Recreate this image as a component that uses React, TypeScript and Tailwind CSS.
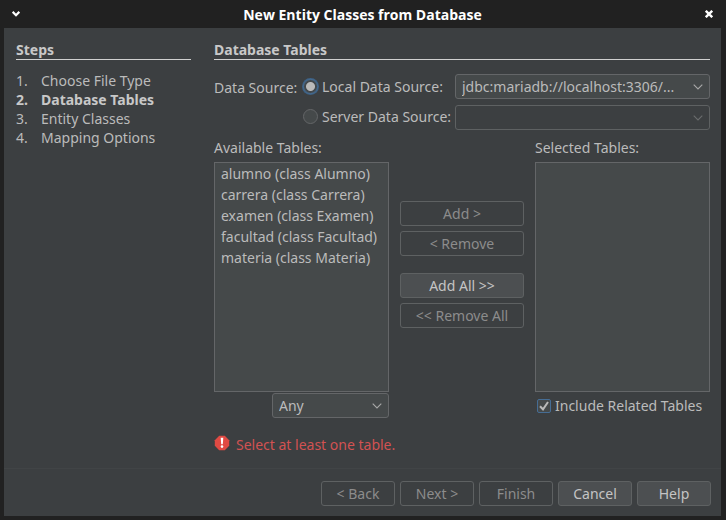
import { useId } from "react";
import type { ReactNode } from "react";

const steps = ["Choose File Type", "Database Tables", "Entity Classes", "Mapping Options"];
const currentStep = 1;

const availableTables = [
  "alumno (class Alumno)",
  "carrera (class Carrera)",
  "examen (class Examen)",
  "facultad (class Facultad)",
  "materia (class Materia)",
];

function Heading({ children }: { children: ReactNode }) {
  return (
    <h2 className="h-5 border-b border-[#d0d0d0] leading-[19px] font-bold text-[#c8c8c8]">{children}</h2>
  );
}

function Button({ children, disabled = false, className = "" }: { children: ReactNode; disabled?: boolean; className?: string }) {
  return (
    <button
      type="button"
      disabled={disabled}
      className={`h-[25px] rounded-[3px] border border-[#5e6162] bg-[#4c4f51] text-center leading-5 text-[#c4c4c4] disabled:bg-transparent disabled:text-[#8c8c8c] ${className}`}
    >
      {children}
    </button>
  );
}

function Combo({ label, value, disabled = false, className = "" }: { label: string; value: string; disabled?: boolean; className?: string }) {
  return (
    <div className={`relative ${className}`}>
      <select
        aria-label={label}
        disabled={disabled}
        className="block h-[25px] w-full appearance-none rounded-[3px] border border-[#646668] bg-[#45494a] pr-8 pl-1.5 leading-5 text-[#bbbbbb] opacity-100 outline-none disabled:border-[#5e6162] disabled:bg-transparent"
      >
        <option>{value}</option>
      </select>
      <svg
        viewBox="0 0 10 6"
        className={`pointer-events-none absolute top-2.5 right-[7px] h-1.5 w-2.5 ${disabled ? "text-[#6a6c6d]" : "text-[#a8a8a8]"}`}
        fill="none"
        stroke="currentColor"
        strokeWidth="1.1"
      >
        <path d="M0.7 0.7 5 5 9.3 0.7" />
      </svg>
    </div>
  );
}

function SourceRadio({ label, checked = false }: { label: string; checked?: boolean }) {
  const id = useId();
  return (
    <div className="flex h-[25px] items-center gap-1">
      <input
        id={id}
        type="radio"
        name="source"
        defaultChecked={checked}
        className="size-[15px] shrink-0 appearance-none rounded-full border border-[#646668] bg-[#45494a] outline-none checked:border-[#466d94] checked:bg-[radial-gradient(circle,#bababa_0_4px,#43494d_5px)] checked:shadow-[0_0_0_1px_#3d6185]"
      />
      <label htmlFor={id} className="whitespace-nowrap">{label}</label>
    </div>
  );
}

export default function App() {
  return (
    <div className="flex min-h-screen flex-col bg-[#212121] pr-[5px] pb-1 pl-1 font-['Noto_Sans',sans-serif] text-[14px] leading-[19px] text-[#bbbbbb]">
      <header className="flex h-7 items-center justify-between px-[7px] text-white">
        <button type="button" aria-label="Window menu" className="flex w-2.5 justify-center">
          <svg viewBox="0 0 8 6" className="h-1.5 w-2" fill="none" stroke="currentColor" strokeWidth="2.2">
            <path d="M0.7 0.9 4 4.2 7.3 0.9" />
          </svg>
        </button>
        <h1 className="font-['Open_Sans',sans-serif] font-bold">New Entity Classes from Database</h1>
        <button type="button" aria-label="Close" className="flex w-2.5 justify-center">
          <svg viewBox="0 0 8 8" className="size-2" fill="none" stroke="currentColor" strokeWidth="2.4">
            <path d="M0.8 0.8 7.2 7.2M7.2 0.8 0.8 7.2" />
          </svg>
        </button>
      </header>

      <div className="flex grow flex-col bg-[#3c3f41]">
        <div className="flex grow gap-[23px] pt-3 pr-[11px] pl-3">
          <aside className="w-[175px] shrink-0">
            <Heading>Steps</Heading>
            <ol className="pt-[11px]">
              {steps.map((step, i) => (
                <li key={step} className={`flex ${i === currentStep ? "font-bold text-[#c8c8c8]" : ""}`}>
                  <span className="w-[25px]">{i + 1}.</span>
                  <span>{step}</span>
                </li>
              ))}
            </ol>
          </aside>

          <main className="min-w-0 grow">
            <Heading>Database Tables</Heading>
            <div className="flex pt-3.5">
              <span className="w-[89px] shrink-0 pt-1">Data Source:</span>
              <div className="flex w-[152px] shrink-0 flex-col gap-[5px]">
                <SourceRadio label="Local Data Source:" checked />
                <SourceRadio label="Server Data Source:" />
              </div>
              <div className="flex min-w-0 grow flex-col gap-1.5">
                <Combo label="Local data source" value="jdbc:mariadb://localhost:3306/..." />
                <Combo label="Server data source" value="" disabled />
              </div>
            </div>

            <div className="flex gap-[11px] pt-2">
              <section className="min-w-0 flex-1">
                <h3 className="h-6">Available Tables:</h3>
                <ul className="h-[230px] border border-[#646668] bg-[#45494a] px-1.5 leading-[21px]">
                  {availableTables.map((table) => (
                    <li key={table} className="whitespace-nowrap">{table}</li>
                  ))}
                </ul>
                <Combo label="Table filter" value="Any" className="mt-px ml-auto w-[117px]" />
              </section>

              <div className="flex w-[124px] shrink-0 flex-col gap-[5px] pt-[63px]">
                <Button disabled>Add &gt;</Button>
                <Button disabled>&lt; Remove</Button>
                <Button className="mt-3">Add All &gt;&gt;</Button>
                <Button disabled>&lt;&lt; Remove All</Button>
              </div>

              <section className="min-w-0 flex-1">
                <h3 className="h-6">Selected Tables:</h3>
                <ul className="h-[230px] border border-[#646668] bg-[#45494a]" />
                <label className="mt-1 flex items-center gap-1 pl-0.5 whitespace-nowrap">
                  <span className="relative flex size-[14px]">
                    <input type="checkbox" defaultChecked className="size-[14px] appearance-none rounded-[2px] border border-[#466d94] bg-[#45494a] outline-none" />
                    <svg viewBox="0 0 14 14" className="pointer-events-none absolute inset-0 size-[14px]" fill="none" stroke="#bababa" strokeWidth="2">
                      <path d="M3 7.2 6 10.3 11 3" />
                    </svg>
                  </span>
                  Include Related Tables
                </label>
              </section>
            </div>

            <p role="alert" className="flex gap-1.5 pt-[17px] text-[#d25252]">
              <svg viewBox="0 0 16 16" className="size-4">
                <path d="M5.2 0.8h5.6L15.2 5.2v5.6L10.8 15.2H5.2L0.8 10.8V5.2Z" fill="#e04a43" />
                <path d="M6.7 2.8h2.6l-.5 6.4H7.2Z" fill="#fff" />
                <circle cx="8" cy="11.6" r="1.3" fill="#fff" />
              </svg>
              Select at least one table.
            </p>
          </main>
        </div>

        <footer className="flex justify-end gap-[5px] border-t border-[#414446] pt-3 pr-2.5 pb-2.5">
          <Button disabled className="w-[74px]">&lt; Back</Button>
          <Button disabled className="w-[74px]">Next &gt;</Button>
          <Button disabled className="w-[74px]">Finish</Button>
          <Button className="w-[74px]">Cancel</Button>
          <Button className="w-[74px]">Help</Button>
        </footer>
      </div>
    </div>
  );
}
